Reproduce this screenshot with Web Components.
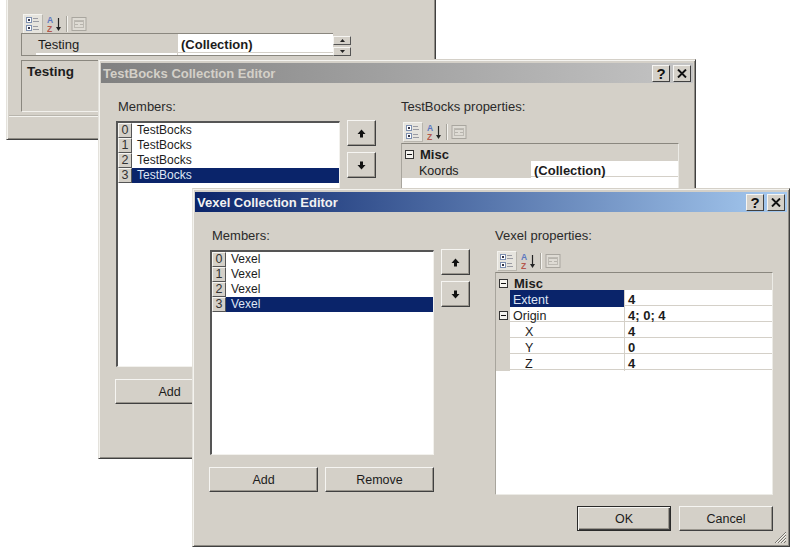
<!DOCTYPE html>
<html>
<head>
<meta charset="utf-8">
<title>Collection Editors</title>
<style>
    html, body { margin: 0; height: 557px; overflow: hidden; background: #fff; }
    body { position: relative; font: 13px "Liberation Sans", Arial, sans-serif; color: #1c1c1c; }
</style>
</head>
<body>
<script>
const FACE = '#d4d0c8';

class WinButton extends HTMLElement {
    constructor() {
        super();
        this.attachShadow({ mode: 'open' });
        this.shadowRoot.innerHTML = `
            <style>
                :host {
                    display: flex;
                    align-items: center;
                    justify-content: center;
                    box-sizing: border-box;
                    height: 25px;
                    font-size: 12.5px;
                    background: ${FACE};
                    border-top: 1px solid #f6f5f2;
                    border-left: 1px solid #f6f5f2;
                    border-right: 1px solid #404040;
                    border-bottom: 1px solid #404040;
                    box-shadow: inset -1px -1px 0 #9a968e;
                }
                :host([default]) {
                    border: 1px solid #2a2a2a;
                    box-shadow: inset 1px 1px 0 #f6f5f2, inset -1px -1px 0 #404040, inset -2px -2px 0 #9a968e;
                }
            </style>
            <slot></slot>`;
    }
}

class SpinButtons extends HTMLElement {
    constructor() {
        super();
        this.attachShadow({ mode: 'open' });
        const btn = (points) => `<div class="b"><svg width="5" height="3" viewBox="0 0 5 3"><polygon points="${points}" fill="#222"/></svg></div>`;
        this.shadowRoot.innerHTML = `
            <style>
                :host { display: flex; flex-direction: column; gap: 2px; width: 18px; padding-top: 3px; box-sizing: border-box; }
                .b {
                    flex: 1;
                    display: flex;
                    align-items: center;
                    justify-content: center;
                    background: ${FACE};
                    border-top: 1px solid #f6f5f2;
                    border-left: 1px solid #f6f5f2;
                    border-right: 1px solid #555;
                    border-bottom: 1px solid #555;
                }
            </style>
            ${btn('2.5,0 5,3 0,3')}
            ${btn('0,0 5,0 2.5,3')}`;
    }
}

class PropToolbar extends HTMLElement {
    constructor() {
        super();
        this.attachShadow({ mode: 'open' });
        this.shadowRoot.innerHTML = `
            <style>
                :host { display: flex; align-items: center; height: 20px; padding-left: 2px; }
                .on {
                    display: flex;
                    align-items: center;
                    justify-content: center;
                    box-sizing: border-box;
                    width: 20px;
                    height: 20px;
                    background: #e6e4de;
                    border: 1px solid #f4f3ef;
                    border-right-color: #b8b5ad;
                    border-bottom-color: #b8b5ad;
                }
                .az { margin-left: 4px; }
                .sep { width: 1px; height: 16px; margin: 0 4px 0 4px; background: #a8a59d; box-shadow: 1px 0 0 #f4f3ef; }
                svg { display: block; }
                text { font: bold 8.5px "Liberation Sans", Arial, sans-serif; }
            </style>
            <div class="on">
                <svg width="16" height="16" viewBox="0 0 16 16">
                    <rect x="1.5" y="1.5" width="5" height="5" fill="#fff" stroke="#7d8fb0"/>
                    <rect x="1.5" y="9.5" width="5" height="5" fill="#fff" stroke="#7d8fb0"/>
                    <rect x="3" y="3" width="2" height="2" fill="#334"/>
                    <rect x="3" y="11" width="2" height="2" fill="#334"/>
                    <path d="M8 2.5h5M8 5.5h6M8 10.5h5M8 13.5h6" stroke="#9a9ba3" fill="none"/>
                </svg>
            </div>
            <svg class="az" width="15" height="19" viewBox="0 0 15 19">
                <text x="0" y="7.7" fill="#5b78c0">A</text>
                <text x="0" y="17.2" fill="#b5574c">Z</text>
                <path d="M11.5 3v11" stroke="#222" stroke-width="1.2"/>
                <polygon points="9,12 14,12 11.5,16" fill="#222"/>
            </svg>
            <div class="sep"></div>
            <svg width="16" height="16" viewBox="0 0 16 16">
                <rect x="1" y="1.5" width="14" height="13" fill="#dedbd4" stroke="#a9a69f"/>
                <path d="M4 5.5h8M4 8.5h3M9 8.5h3" stroke="#b7b4ad" fill="none"/>
                <rect x="3.5" y="4.5" width="9" height="7" fill="none" stroke="#bdbab3"/>
            </svg>`;
    }
}

class PropRow extends HTMLElement {
    constructor() {
        super();
        this.attachShadow({ mode: 'open' });
    }

    connectedCallback() {
        const name = this.getAttribute('name') || '';
        const value = this.getAttribute('value') || '';
        const indent = this.getAttribute('indent') || 0;
        const minus = this.hasAttribute('expander')
            ? `<svg width="9" height="9" viewBox="0 0 9 9"><rect x=".5" y=".5" width="8" height="8" fill="#f4f3ef" stroke="#333"/><path d="M2 4.5h5" stroke="#111"/></svg>`
            : '';
        this.shadowRoot.innerHTML = `
            <style>
                :host {
                    display: grid;
                    grid-template-columns: 14px var(--name-w, 115px) 1fr;
                    box-sizing: border-box;
                    height: var(--row-h, 16px);
                    border-bottom: 1px solid ${FACE};
                    background: #fff;
                    line-height: 14px;
                }
                :host([category]) { height: 17px; background: ${FACE}; grid-template-columns: 14px 1fr; font-weight: bold; border-bottom: 0; }
                .margin { background: ${FACE}; display: flex; align-items: center; padding: 1px 0 0 3px; box-sizing: border-box; }
                .name {
                    padding: var(--row-pad, 3px) 0 0 calc(var(--name-pad, 3px) + ${indent}px);
                    font-size: var(--name-size, 12.5px);
                    border-right: 1px solid ${FACE};
                    white-space: nowrap;
                }
                :host([category]) .name { padding-top: 3px; padding-left: 4px; font-size: 13px; line-height: 16px; border: 0; }
                :host([muted]) .name { background: ${FACE}; }
                :host([selected]) .name { background: #0a246a; color: #dfe6f5; }
                .value { padding: var(--row-pad, 3px) 0 0 3px; font-weight: bold; font-size: 13px; white-space: nowrap; }
                :host([category]) .value { display: none; }
            </style>
            <div class="margin">${minus}</div>
            <div class="name">${name}</div>
            <div class="value">${value}</div>`;
    }
}

class PropGrid extends HTMLElement {
    constructor() {
        super();
        this.attachShadow({ mode: 'open' });
        this.shadowRoot.innerHTML = `
            <style>
                :host {
                    display: block;
                    box-sizing: border-box;
                    overflow: hidden;
                    background: #fff;
                    border-top: 1px solid #8a877f;
                    border-left: 1px solid #a8a59d;
                    border-right: 1px solid #ecebe6;
                    border-bottom: 1px solid #ecebe6;
                }
            </style>
            <slot></slot>`;
    }
}

class MemberList extends HTMLElement {
    constructor() {
        super();
        this.attachShadow({ mode: 'open' });
    }

    connectedCallback() {
        const items = (this.getAttribute('items') || '').split(',');
        const selected = Number(this.getAttribute('selected'));
        this.shadowRoot.innerHTML = `
            <style>
                :host {
                    display: block;
                    box-sizing: border-box;
                    background: #fff;
                    border-top: 2px solid #555;
                    border-left: 2px solid #555;
                    border-right: 1px solid #f2f1ed;
                    border-bottom: 1px solid #f2f1ed;
                    font-size: 12px;
                }
                .row { display: flex; height: 15px; line-height: 15px; }
                .idx {
                    box-sizing: border-box;
                    width: 14px;
                    text-align: center;
                    font-size: 12.5px;
                    color: #333;
                    background: ${FACE};
                    border: 1px solid #f6f5f2;
                    border-right-color: #555;
                    border-bottom-color: #555;
                    line-height: 13px;
                }
                .txt { flex: 1; padding-left: 5px; }
                .row.sel .txt { background: #0a246a; color: #dfe6f5; }
            </style>
            ${items.map((item, i) => `
                <div class="row ${i === selected ? 'sel' : ''}">
                    <div class="idx">${i}</div>
                    <div class="txt">${item}</div>
                </div>`).join('')}`;
    }
}

class WinDialog extends HTMLElement {
    constructor() {
        super();
        this.attachShadow({ mode: 'open' });
    }

    connectedCallback() {
        const grip = this.hasAttribute('grip')
            ? `<svg class="grip" width="13" height="13" viewBox="0 0 13 13"><path d="M12 1 1 12M12 4 4 12M12 7 7 12M12 10 10 12" stroke="#77746d" fill="none"/><path d="M12 2 2 12M12 5 5 12M12 8 8 12" stroke="#f4f3ef" fill="none"/></svg>`
            : '';
        const caption = this.getAttribute('caption');
        const title = caption ? `
            <div class="title">
                <span>${caption}</span>
                <div class="caps">
                    <div class="cap">?</div>
                    <div class="cap"><svg width="10" height="9" viewBox="0 0 10 9"><path d="M1 0.5 9 8.5M9 0.5 1 8.5" stroke="#111" stroke-width="1.9"/></svg></div>
                </div>
            </div>` : '';
        this.shadowRoot.innerHTML = `
            <style>
                :host {
                    position: absolute;
                    display: flex;
                    flex-direction: column;
                    box-sizing: border-box;
                    background: ${FACE};
                    border-top: 1px solid ${FACE};
                    border-left: 1px solid #e4e2dc;
                    border-right: 1px solid #404040;
                    border-bottom: 1px solid #404040;
                    box-shadow: inset 1px 1px 0 #f4f3ef, inset -1px -1px 0 #8f8c85;
                    padding: 2px;
                }
                .title {
                    flex: none;
                    display: flex;
                    align-items: center;
                    justify-content: space-between;
                    height: 20px;
                    margin-top: 1px;
                    padding: 0 2px 0 2px;
                    font-weight: bold;
                    font-size: 13px;
                    color: #f2f2f2;
                    background: linear-gradient(90deg, #0a246a, #a6caf0);
                }
                :host([inactive]) .title { color: ${FACE}; background: linear-gradient(90deg, #808080, #c4c4c4); }
                .caps { display: flex; gap: 3px; }
                .cap {
                    box-sizing: border-box;
                    width: 18px;
                    height: 17px;
                    display: flex;
                    align-items: center;
                    justify-content: center;
                    color: #111;
                    font-size: 15px;
                    line-height: 15px;
                    background: ${FACE};
                    border: 1px solid #f6f5f2;
                    border-right-color: #404040;
                    border-bottom-color: #404040;
                }
                .content { flex: 1; min-height: 0; display: flex; flex-direction: column; }
                .grip { position: absolute; right: 2px; bottom: 2px; }
            </style>
            ${title}
            <div class="content"><slot></slot></div>
            ${grip}`;
    }
}

class CollectionEditor extends HTMLElement {
    constructor() {
        super();
        this.attachShadow({ mode: 'open' });
    }

    connectedCallback() {
        const arrow = (d) => `<svg width="9" height="9" viewBox="0 0 9 9"><path d="${d}" fill="#111"/></svg>`;
        this.shadowRoot.innerHTML = `
            <style>
                :host { flex: 1; min-height: 0; display: flex; flex-direction: column; padding: 16px 14px 13px 15px; }
                .main { flex: 1; min-height: 0; display: grid; grid-template-columns: 224px 29px 1fr; column-gap: 7px; }
                .col { display: flex; flex-direction: column; min-height: 0; min-width: 0; }
                .right { margin-left: 18px; }
                .label { height: 15px; line-height: 16px; font-size: 13px; color: #2a2a2a; white-space: nowrap; }
                .col:first-child .label { padding-left: 2px; }
                member-list { flex: 1; margin-top: 7px; min-height: 0; }
                .add { display: grid; grid-template-columns: 1fr 1fr; gap: 7px; margin: 12px 0 3px -1px; width: 225px; }
                .move { display: flex; flex-direction: column; gap: 6px; padding-top: 21px; }
                .move win-button { height: 26px; }
                prop-toolbar { margin-top: 8px; }
                prop-grid { flex: 1; margin-top: 1px; min-height: 0; }
                .footer { flex: none; display: flex; justify-content: flex-end; gap: 8px; margin-top: 11px; }
                .footer win-button { width: 94px; }
            </style>
            <div class="main">
                <div class="col">
                    <div class="label">Members:</div>
                    <member-list items="${this.getAttribute('items')}" selected="${this.getAttribute('selected')}"></member-list>
                    <div class="add">
                        <win-button>Add</win-button>
                        <win-button>Remove</win-button>
                    </div>
                </div>
                <div class="move">
                    <win-button>${arrow('M4.5 0.5 8.5 5H6V8.5H3V5H0.5Z')}</win-button>
                    <win-button>${arrow('M4.5 8.5 8.5 4H6V0.5H3V4H0.5Z')}</win-button>
                </div>
                <div class="col right">
                    <div class="label">${this.getAttribute('type')} properties:</div>
                    <prop-toolbar></prop-toolbar>
                    <prop-grid><slot></slot></prop-grid>
                </div>
            </div>
            <div class="footer">
                <win-button default>OK</win-button>
                <win-button>Cancel</win-button>
            </div>`;
    }
}

class PropertyPanel extends HTMLElement {
    constructor() {
        super();
        this.attachShadow({ mode: 'open' });
        this.shadowRoot.innerHTML = `
            <style>
                :host { flex: 1; display: flex; flex-direction: column; padding-top: 21px; }
                .pad { padding-left: 12px; width: 330px; }
                prop-toolbar { margin-bottom: -1px; height: 20px; }
                .grid { display: flex; height: 23px; }
                prop-grid {
                    flex: 1;
                    --name-w: 142px;
                    --row-h: 19px;
                    --row-pad: 4px;
                    --name-pad: 2px;
                    --name-size: 13px;
                    border-right: 0;
                    border-left-color: #8a877f;
                    border-bottom-color: #8a877f;
                }
                .help {
                    box-sizing: border-box;
                    height: 52px;
                    margin-top: 4px;
                    padding: 3px 5px;
                    font-weight: bold;
                    font-size: 13.5px;
                    border: 1px solid #8a877f;
                    border-right-color: #f2f1ed;
                    border-bottom-color: #f2f1ed;
                }
                .rule { height: 1px; margin-top: 4px; background: #f4f3ef; box-shadow: 0 -1px 0 #b8b5ad; }
            </style>
            <div class="pad">
                <prop-toolbar></prop-toolbar>
                <div class="grid">
                    <prop-grid><slot></slot></prop-grid>
                    <spin-buttons></spin-buttons>
                </div>
                <div class="help">Testing</div>
            </div>
            <div class="rule"></div>`;
    }
}

customElements.define('win-button', WinButton);
customElements.define('spin-buttons', SpinButtons);
customElements.define('prop-toolbar', PropToolbar);
customElements.define('prop-row', PropRow);
customElements.define('prop-grid', PropGrid);
customElements.define('member-list', MemberList);
customElements.define('win-dialog', WinDialog);
customElements.define('collection-editor', CollectionEditor);
customElements.define('property-panel', PropertyPanel);
</script>

<win-dialog style="left:6px;top:-10px;width:430px;height:150px">
    <property-panel>
        <prop-row name="Testing" value="(Collection)" muted></prop-row>
        <prop-row></prop-row>
    </property-panel>
</win-dialog>

<win-dialog inactive caption="TestBocks Collection Editor" style="left:98px;top:59px;width:598px;height:400px">
    <collection-editor type="TestBocks" items="TestBocks,TestBocks,TestBocks,TestBocks" selected="3">
        <prop-row category name="Misc" expander></prop-row>
        <prop-row name="Koords" value="(Collection)" muted></prop-row>
    </collection-editor>
</win-dialog>

<win-dialog grip caption="Vexel Collection Editor" style="left:192px;top:188px;width:598px;height:359px">
    <collection-editor type="Vexel" items="Vexel,Vexel,Vexel,Vexel" selected="3">
        <prop-row category name="Misc" expander></prop-row>
        <prop-row name="Extent" value="4" selected></prop-row>
        <prop-row name="Origin" value="4; 0; 4" expander></prop-row>
        <prop-row name="X" value="4" indent="12"></prop-row>
        <prop-row name="Y" value="0" indent="12"></prop-row>
        <prop-row name="Z" value="4" indent="12"></prop-row>
    </collection-editor>
</win-dialog>
</body>
</html>
